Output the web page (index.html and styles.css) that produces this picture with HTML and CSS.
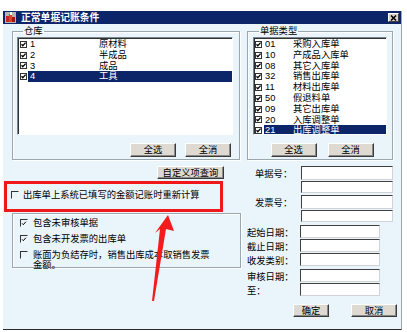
FILE: index.html
```html
<!DOCTYPE html>
<html lang="zh-CN">
<head>
    <meta charset="UTF-8">
    <title>正常单据记账条件</title>
    <link rel="stylesheet" href="styles.css">
</head>
<body>
<div class="screen">
    <div class="dialog">
        <div class="titlebar">
            <svg class="app-icon" width="11" height="11" viewBox="0 0 11 11">
                <rect x="0" y="0" width="11" height="11" fill="#b8b4ac"/>
                <rect x="1" y="4" width="3" height="6" fill="#c8281c"/>
                <rect x="4" y="2" width="3" height="8" fill="#e04030"/>
                <rect x="7" y="5" width="3" height="5" fill="#a01810"/>
                <rect x="5" y="0" width="2" height="3" fill="#fff"/>
            </svg>
            <span class="title">正常单据记账条件</span>
            <span class="close">
                <svg width="7" height="6" viewBox="0 0 7 6"><path d="M1 .5l5 5M6 .5l-5 5" stroke="#000" stroke-width="1.5"/></svg>
            </span>
        </div>

        <div class="top-row">
            <fieldset class="group group-store">
                <legend>仓库</legend>
                <ul class="list list-store">
                    <li><svg class="cb" viewBox="0 0 7 7"><rect x=".5" y=".5" width="6" height="6" fill="#fff" stroke="#333"/><path d="M1.5 3.3l1.3 1.5 2.8-3.2" fill="none" stroke="#000" stroke-width="1.3"/></svg><span class="item"><span class="code">1</span><span class="name">原材料</span></span></li>
                    <li><svg class="cb" viewBox="0 0 7 7"><rect x=".5" y=".5" width="6" height="6" fill="#fff" stroke="#333"/><path d="M1.5 3.3l1.3 1.5 2.8-3.2" fill="none" stroke="#000" stroke-width="1.3"/></svg><span class="item"><span class="code">2</span><span class="name">半成品</span></span></li>
                    <li><svg class="cb" viewBox="0 0 7 7"><rect x=".5" y=".5" width="6" height="6" fill="#fff" stroke="#333"/><path d="M1.5 3.3l1.3 1.5 2.8-3.2" fill="none" stroke="#000" stroke-width="1.3"/></svg><span class="item"><span class="code">3</span><span class="name">成品</span></span></li>
                    <li class="selected"><svg class="cb" viewBox="0 0 7 7"><rect x=".5" y=".5" width="6" height="6" fill="#fff" stroke="#333"/><path d="M1.5 3.3l1.3 1.5 2.8-3.2" fill="none" stroke="#000" stroke-width="1.3"/></svg><span class="item"><span class="code">4</span><span class="name">工具</span></span></li>
                </ul>
                <div class="group-btns group-btns-end">
                    <button class="btn">全选</button>
                    <button class="btn">全消</button>
                </div>
            </fieldset>

            <fieldset class="group group-type">
                <legend>单据类型</legend>
                <ul class="list list-type">
                    <li><svg class="cb" viewBox="0 0 7 7"><rect x=".5" y=".5" width="6" height="6" fill="#fff" stroke="#333"/><path d="M1.5 3.3l1.3 1.5 2.8-3.2" fill="none" stroke="#000" stroke-width="1.3"/></svg><span class="item"><span class="code">01</span><span class="name">采购入库单</span></span></li>
                    <li><svg class="cb" viewBox="0 0 7 7"><rect x=".5" y=".5" width="6" height="6" fill="#fff" stroke="#333"/><path d="M1.5 3.3l1.3 1.5 2.8-3.2" fill="none" stroke="#000" stroke-width="1.3"/></svg><span class="item"><span class="code">10</span><span class="name">产成品入库单</span></span></li>
                    <li><svg class="cb" viewBox="0 0 7 7"><rect x=".5" y=".5" width="6" height="6" fill="#fff" stroke="#333"/><path d="M1.5 3.3l1.3 1.5 2.8-3.2" fill="none" stroke="#000" stroke-width="1.3"/></svg><span class="item"><span class="code">08</span><span class="name">其它入库单</span></span></li>
                    <li><svg class="cb" viewBox="0 0 7 7"><rect x=".5" y=".5" width="6" height="6" fill="#fff" stroke="#333"/><path d="M1.5 3.3l1.3 1.5 2.8-3.2" fill="none" stroke="#000" stroke-width="1.3"/></svg><span class="item"><span class="code">32</span><span class="name">销售出库单</span></span></li>
                    <li><svg class="cb" viewBox="0 0 7 7"><rect x=".5" y=".5" width="6" height="6" fill="#fff" stroke="#333"/><path d="M1.5 3.3l1.3 1.5 2.8-3.2" fill="none" stroke="#000" stroke-width="1.3"/></svg><span class="item"><span class="code">11</span><span class="name">材料出库单</span></span></li>
                    <li><svg class="cb" viewBox="0 0 7 7"><rect x=".5" y=".5" width="6" height="6" fill="#fff" stroke="#333"/><path d="M1.5 3.3l1.3 1.5 2.8-3.2" fill="none" stroke="#000" stroke-width="1.3"/></svg><span class="item"><span class="code">50</span><span class="name">假退料单</span></span></li>
                    <li><svg class="cb" viewBox="0 0 7 7"><rect x=".5" y=".5" width="6" height="6" fill="#fff" stroke="#333"/><path d="M1.5 3.3l1.3 1.5 2.8-3.2" fill="none" stroke="#000" stroke-width="1.3"/></svg><span class="item"><span class="code">09</span><span class="name">其它出库单</span></span></li>
                    <li><svg class="cb" viewBox="0 0 7 7"><rect x=".5" y=".5" width="6" height="6" fill="#fff" stroke="#333"/><path d="M1.5 3.3l1.3 1.5 2.8-3.2" fill="none" stroke="#000" stroke-width="1.3"/></svg><span class="item"><span class="code">20</span><span class="name">入库调整单</span></span></li>
                    <li class="selected"><svg class="cb" viewBox="0 0 7 7"><rect x=".5" y=".5" width="6" height="6" fill="#fff" stroke="#333"/><path d="M1.5 3.3l1.3 1.5 2.8-3.2" fill="none" stroke="#000" stroke-width="1.3"/></svg><span class="item"><span class="code">21</span><span class="name">出库调整单</span></span></li>
                </ul>
                <div class="group-btns group-btns-center">
                    <button class="btn">全选</button>
                    <button class="btn">全消</button>
                </div>
            </fieldset>
        </div>

        <div class="bottom-row">
            <div class="left-col">
                <div class="custom-row">
                    <button class="btn btn-custom">自定义项查询</button>
                </div>
                <div class="mark-box">
                    <div class="opt">
                        <span class="flat-cb"></span>
                        <span>出库单上系统已填写的金额记账时重新计算</span>
                    </div>
                </div>
                <div class="opt-group">
                    <div class="opt">
                        <span class="flat-cb"><svg viewBox="0 0 8 8"><path d="M1.5 3.8l1.6 1.8 3.4-4" fill="none" stroke="#000" stroke-width="1.3"/></svg></span>
                        <span>包含未审核单据</span>
                    </div>
                    <div class="opt">
                        <span class="flat-cb"><svg viewBox="0 0 8 8"><path d="M1.5 3.8l1.6 1.8 3.4-4" fill="none" stroke="#000" stroke-width="1.3"/></svg></span>
                        <span>包含未开发票的出库单</span>
                    </div>
                    <div class="opt opt-wrap">
                        <span class="flat-cb"></span>
                        <span class="wrap-text">账面为负结存时，销售出库成本取销售发票金额。</span>
                    </div>
                </div>
            </div>

            <div class="right-col">
                <div class="field field-no">
                    <span class="lbl lbl-indent">单据号：</span>
                    <span class="input input-wide"></span>
                </div>
                <div class="field field-sub">
                    <span class="lbl"></span>
                    <span class="input input-wide"></span>
                </div>
                <div class="field field-no">
                    <span class="lbl lbl-indent">发票号：</span>
                    <span class="input input-wide"></span>
                </div>
                <div class="field field-sub">
                    <span class="lbl"></span>
                    <span class="input input-wide"></span>
                </div>
                <div class="field field-gap">
                    <span class="lbl">起始日期：</span>
                    <span class="input"></span>
                </div>
                <div class="field">
                    <span class="lbl">截止日期：</span>
                    <span class="input"></span>
                </div>
                <div class="field">
                    <span class="lbl">收发类别：</span>
                    <span class="input"></span>
                </div>
                <div class="field field-gap">
                    <span class="lbl">审核日期：</span>
                    <span class="input"></span>
                </div>
                <div class="field">
                    <span class="lbl">至：</span>
                    <span class="input"></span>
                </div>
                <div class="actions">
                    <button class="btn btn-ok">确定</button>
                    <button class="btn btn-cancel">取消</button>
                </div>
            </div>
        </div>
    </div>

    <!-- red annotation arrow drawn over the dialog -->
    <svg class="arrow" width="407" height="332" viewBox="0 0 407 332">
        <polygon points="168,215 174,231 166,229 154,301 152,301 160,229 155,233" fill="#f21c1c"/>
    </svg>
</div>
</body>
</html>
```

FILE: styles.css
```css
body {
    margin: 0;
    background-color: #fff;
    font-family: 'Liberation Sans', 'Noto Sans CJK SC', sans-serif;
    font-size: 9.3px;
    color: #000;
}
.screen {
    position: relative;
    width: 407px;
    height: 332px;
    overflow: hidden;
}
.dialog {
    margin: 11px 0 0 3px;
    width: 399px;
    height: 319px;
    box-sizing: border-box;
    background-color: #e9f4fb;
    border-bottom: 1px solid #2a2a2a;
    border-right: 1px solid #9aa6b0;
}

/* title bar */
.titlebar {
    height: 13px;
    background-color: #0c2468;
    display: flex;
    align-items: center;
    padding: 0 2px;
}
.app-icon {
    flex: none;
}
.title {
    margin-left: 5px;
    color: #fff;
    font-weight: bold;
    font-size: 9.8px;
    line-height: 13px;
    flex: 1;
}
.close {
    width: 11px;
    height: 9px;
    background-color: #d6d2ca;
    border: 1px solid;
    border-color: #fff #404040 #404040 #fff;
    box-sizing: border-box;
    display: flex;
    align-items: center;
    justify-content: center;
    margin-right: 0;
}

/* group boxes */
.top-row {
    display: flex;
    gap: 7px;
    padding: 2px 0 0 9px;
    height: 136px;
    box-sizing: border-box;
}
.group {
    margin: 0;
    padding: 1px 4px 3px 4px;
    border: 1px solid #9aa6b0;
    box-shadow: inset 1px 1px 0 #fff, 1px 1px 0 #fff;
    min-width: 0;
}
.group legend {
    padding: 0 1px;
    margin-left: 6px;
    line-height: 10px;
}
.group-store {
    width: 228px;
    box-sizing: border-box;
}
.group-type {
    width: 146px;
    box-sizing: border-box;
    padding-left: 5px;
}

/* list boxes */
.list {
    list-style: none;
    margin: 0;
    padding: 0;
    height: 98px;
    box-sizing: border-box;
    background-color: #fff;
    border: 1px solid;
    border-color: #7c8690 #fff #fff #7c8690;
    box-shadow: inset 1px 1px 0 #303030;
    overflow: hidden;
}
.list-store {
    width: 216px;
}
.list-type {
    width: 134px;
}
.list li {
    display: flex;
    align-items: center;
    height: 10.8px;
    line-height: 10.8px;
    white-space: nowrap;
}
.list li:first-child {
    margin-top: 1px;
}
.cb {
    width: 7px;
    height: 7px;
    flex: none;
}
.item {
    display: flex;
    flex: 1;
    height: 100%;
}
.list-store .cb {
    margin-left: 2px;
}
.list-store .item {
    padding-left: 2px;
    margin-left: 1px;
}
.list-store .code {
    width: 69px;
}
.list-type .cb {
    margin-left: 1px;
}
.list-type .item {
    padding-left: 1px;
    margin-left: 2px;
}
.list-type .code {
    width: 28px;
}
.list li.selected .item {
    background-color: #0c2468;
    color: #fff;
}

/* buttons */
.btn {
    font-family: inherit;
    font-size: 9.3px;
    height: 14px;
    padding: 0;
    margin: 0;
    background-color: #dedad2;
    border: 1px solid;
    border-color: #fff #3a3a3a #3a3a3a #fff;
    box-shadow: inset -1px -1px 0 #8a8a8a;
    color: #000;
    line-height: 12px;
}
.group-btns {
    display: flex;
    margin-top: 8px;
}
.group-btns .btn {
    width: 46px;
}
.group-btns-end {
    justify-content: flex-end;
    gap: 9px;
    padding-right: 4px;
}
.group-btns-center {
    justify-content: center;
    gap: 11px;
    padding-left: 3px;
}

/* lower area */
.bottom-row {
    display: flex;
}
.left-col {
    width: 237px;
    margin-left: 1px;
}
.custom-row {
    display: flex;
    justify-content: flex-end;
    padding-right: 17px;
    margin-top: 6px;
}
.btn-custom {
    width: 67px;
    height: 13px;
}
.mark-box {
    margin-top: 2px;
    width: 219px;
    height: 31px;
    box-sizing: border-box;
    border: 3px solid #f01818;
    padding: 6px 0 0 4px;
}
.opt {
    display: flex;
    align-items: center;
    line-height: 10px;
    white-space: nowrap;
}
.flat-cb {
    width: 8px;
    height: 8px;
    box-sizing: border-box;
    border-top: 1px solid #333;
    border-left: 1px solid #333;
    border-right: 1px solid #f4f8fb;
    border-bottom: 1px solid #f4f8fb;
    margin-right: 5px;
    flex: none;
    display: flex;
}
.flat-cb svg {
    width: 7px;
    height: 7px;
}
.mark-box .flat-cb {
    margin-right: 4px;
}
.opt-group {
    margin: 1px 0 0 8px;
    height: 55px;
    box-sizing: border-box;
    border: 1px solid #9aa6b0;
    box-shadow: inset 1px 1px 0 #fff, 1px 1px 0 #fff;
    padding: 4px 0 0 7px;
}
.opt-group .opt + .opt {
    margin-top: 6px;
}
.opt-group .opt-wrap {
    margin-top: 3px;
    align-items: flex-start;
}
.opt-wrap .flat-cb {
    margin-top: 1px;
}
.wrap-text {
    white-space: normal;
    width: 180px;
}

/* form fields on the right */
.right-col {
    margin-left: 6px;
    width: 151px;
}
.field {
    display: flex;
    align-items: center;
    height: 13px;
    margin-top: 1px;
}
.field-no {
    height: 14px;
    margin-top: 2px;
}
.right-col .field:first-child {
    margin-top: 6px;
}
.field-sub {
    height: 12px;
    margin-top: 1px;
}
.field-gap {
    margin-top: 3px;
}
.lbl {
    width: 53px;
    flex: none;
    white-space: nowrap;
}
.lbl-indent {
    padding-left: 8px;
    box-sizing: border-box;
}
.input {
    width: 80px;
    height: 100%;
    box-sizing: border-box;
    background-color: #fff;
    border: 1px solid;
    border-color: #404040 #d0d4d8 #d0d4d8 #404040;
}
.input-wide {
    width: 92px;
    margin-left: 1px;
}
.actions {
    display: flex;
    margin-top: 8px;
    padding-left: 46px;
    gap: 22px;
}
.btn-ok {
    width: 36px;
    height: 13px;
}
.btn-cancel {
    width: 46px;
    height: 13px;
}

.arrow {
    position: absolute;
    left: 0;
    top: 0;
    pointer-events: none;
}
```
